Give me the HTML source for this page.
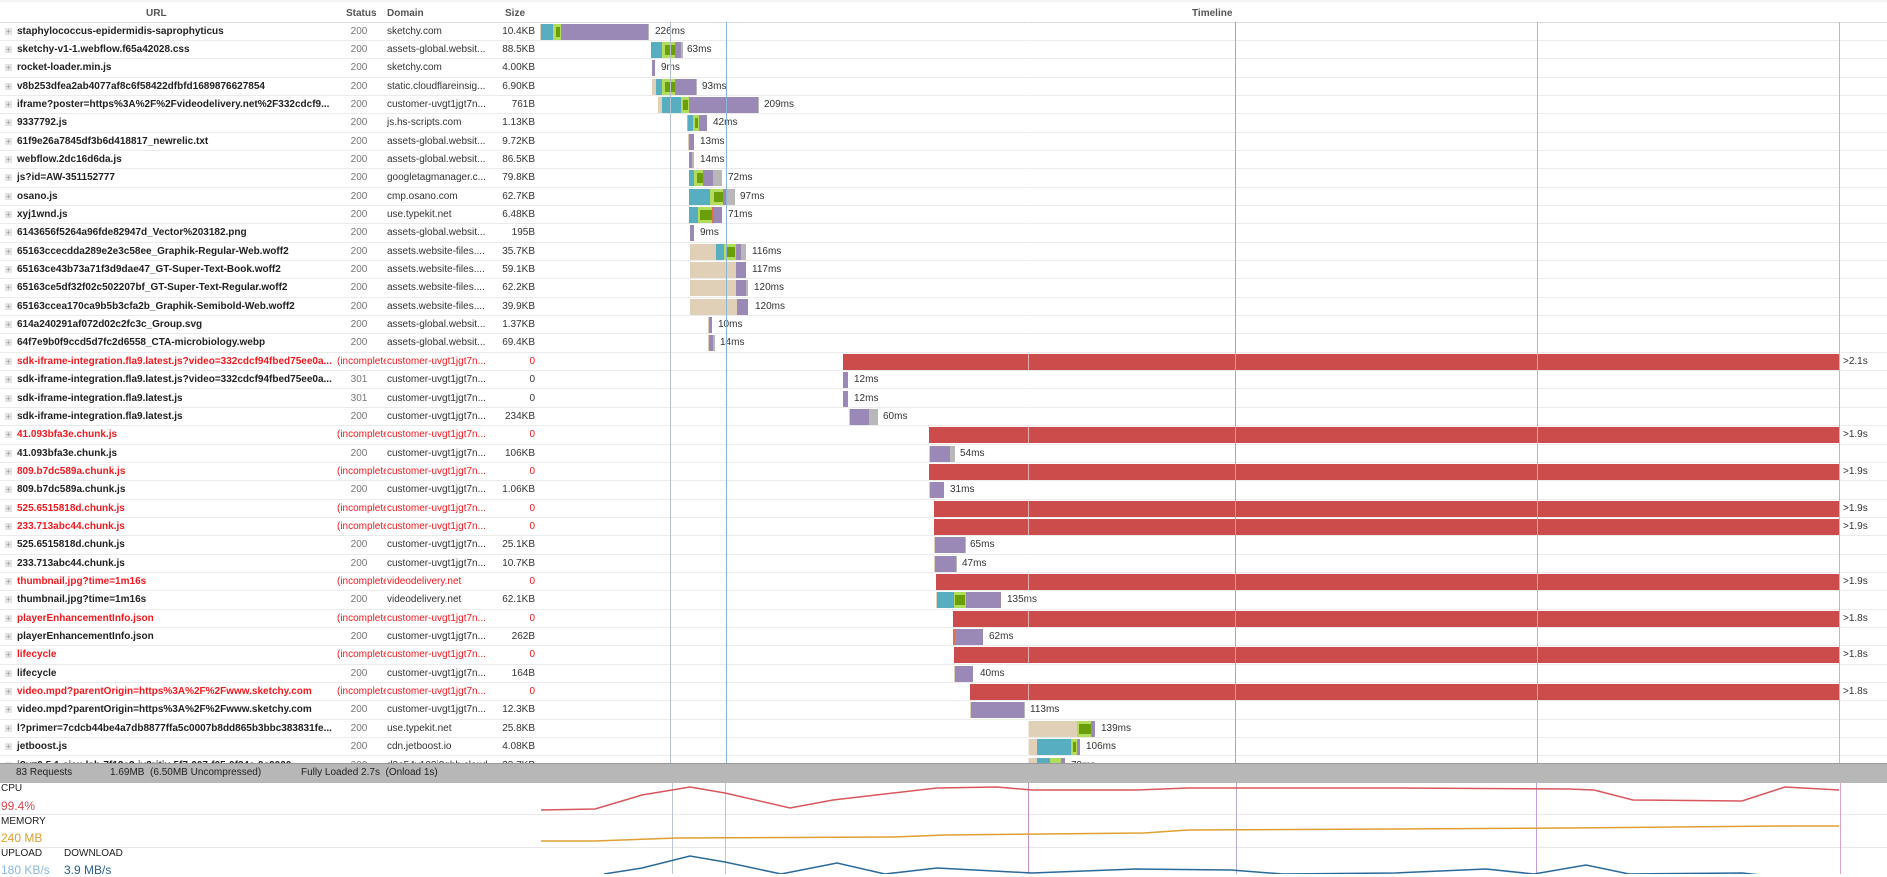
<!DOCTYPE html>
<html><head><meta charset="utf-8">
<style>
*{margin:0;padding:0;box-sizing:border-box}
body{width:1887px;height:874px;overflow:hidden;background:#fff;font-family:"Liberation Sans",Arial,sans-serif;font-size:10px;color:#222;position:relative}
.a{position:absolute;white-space:nowrap}
.hdr{position:absolute;top:8px;font-size:10px;color:#555;font-weight:bold}
.row{position:absolute;left:0;width:1887px;height:18.35px;border-bottom:1px solid #ebebeb}
.pl{position:absolute;left:5px;top:5px;width:7px;height:7px;background:#e4e4e4;color:#999;font-size:8px;line-height:7px;text-align:center}
.url{position:absolute;left:17px;top:3px;font-weight:bold;color:#222}
.st{position:absolute;left:330px;width:58px;top:3px;text-align:center;color:#777}
.dm{position:absolute;left:387px;top:3px;color:#333}
.sz{position:absolute;left:470px;width:65px;top:3px;text-align:right;color:#333}
.red .url,.red .st,.red .dm,.red .sz{color:#f0191e}
.red .st{left:337px;width:49px;text-align:left;overflow:hidden}
.seg{position:absolute;top:1px;height:16px}
.lbl{position:absolute;top:3px;color:#333}
.vl{position:absolute;width:1px}
</style></head><body>
<div class="a" style="left:0;top:0;width:1887px;height:2px;background:#f4f4f4"></div>
<div class="hdr" style="left:146px">URL</div>
<div class="hdr" style="left:346px">Status</div>
<div class="hdr" style="left:387px">Domain</div>
<div class="hdr" style="left:505px">Size</div>
<div class="hdr" style="left:1192px">Timeline</div>
<div class="a" style="left:0;top:21.5px;width:1887px;height:1px;background:#ddd"></div>
<div id="rows"></div>
<div id="lines"></div>
<div class="a" style="left:0;top:763px;width:1887px;height:20px;background:#b7b7b7;border-top:1px solid #999"></div>
<div class="a" style="left:16px;top:767px;color:#222">83 Requests</div>
<div class="a" style="left:110px;top:767px;color:#222">1.69MB&nbsp; (6.50MB Uncompressed)</div>
<div class="a" style="left:301px;top:767px;color:#222">Fully Loaded 2.7s&nbsp; (Onload 1s)</div>
<div class="a" style="left:1px;top:783px;color:#222;font-size:10px">CPU</div>
<div class="a" style="left:1px;top:799px;color:#d44a4f;font-size:12px">99.4%</div>
<div class="a" style="left:0;top:814px;width:1887px;height:1px;background:#e8e8e8"></div>
<div class="a" style="left:1px;top:816px;color:#222;font-size:10px">MEMORY</div>
<div class="a" style="left:1px;top:831px;color:#e0a030;font-size:12px">240 MB</div>
<div class="a" style="left:0;top:847px;width:1887px;height:1px;background:#e8e8e8"></div>
<div class="a" style="left:1px;top:848px;color:#222;font-size:10px">UPLOAD</div>
<div class="a" style="left:64px;top:848px;color:#222;font-size:10px">DOWNLOAD</div>
<div class="a" style="left:1px;top:863px;color:#8ab8e0;font-size:12px">180 KB/s</div>
<div class="a" style="left:64px;top:863px;color:#2a6090;font-size:12px">3.9 MB/s</div>
<svg class="a" style="left:0;top:783px" width="1887" height="91" viewBox="0 783 1887 91">
<g stroke-width="1">
<line x1="672.5" y1="783" x2="672.5" y2="874" stroke="#b8c8d8"/>
<line x1="725.5" y1="783" x2="725.5" y2="874" stroke="#b8c8d8"/>
<line x1="1028.5" y1="783" x2="1028.5" y2="874" stroke="#c890c0"/>
<line x1="1236.5" y1="783" x2="1236.5" y2="874" stroke="#b8a8d0"/>
<line x1="1536.5" y1="783" x2="1536.5" y2="874" stroke="#c0a0e0"/>
<line x1="1840.5" y1="783" x2="1840.5" y2="874" stroke="#e0a0c8"/>
</g>
<polyline fill="none" stroke="#d9575c" stroke-width="1.5" points="541,810 595,809 642,795 690,787 725,793 790,808 833,800 937,788 997,787 1032,790 1136,790 1188,788 1395,788 1568,789 1594,790 1633,800 1742,801 1785,787 1839,790"/>
<polyline fill="none" stroke="#e0a030" stroke-width="1.5" points="541,841 595,841 677,838 893,837 945,835 1144,833 1188,830 1395,829 1568,828 1785,826 1839,826"/>
<polyline fill="none" stroke="#2a6a9a" stroke-width="1.5" points="604,874 642,868 690,856 725,862 781,874 837,863 885,874 937,868 1032,873 1136,869 1231,870 1283,874 1395,873 1486,869 1534,874 1586,865 1629,874 1742,873 1770,876"/>
</svg>
<script>
var T='#56aec0',LG='#b2dc5c',DG='#6a9e0a',P='#9a88b6',TN='#e0d0b8',G='#b8b8b8',R='#cc4b4b',O='#e07050';
var aw='assets-global.websit...',cu='customer-uvgt1jgt7n...',aw2='assets.website-files....';
var sdk='sdk-iframe-integration.fla9.latest.js?video=332cdcf94fbed75ee0a...';
var rows=[
['staphylococcus-epidermidis-saprophyticus','200','sketchy.com','10.4KB',[[540,541,TN],[541,553,T],[553,561,LG],[556,560,DG],[561,648,P],[648,649,G]],'226ms',655],
['sketchy-v1-1.webflow.f65a42028.css','200',aw,'88.5KB',[[651,662,T],[662,675,LG],[665,675,DG],[675,681,P],[681,683,G]],'63ms',687],
['rocket-loader.min.js','200','sketchy.com','4.00KB',[[652,655,P]],'9ms',661],
['v8b253dfea2ab4077af8c6f58422dfbfd1689876627854','200','static.cloudflareinsig...','6.90KB',[[652,656,TN],[656,662,T],[662,675,LG],[665,675,DG],[675,696,P],[696,697,G]],'93ms',702],
['iframe?poster=https%3A%2F%2Fvideodelivery.net%2F332cdcf9...','200',cu,'761B',[[658,662,TN],[662,681,T],[681,689,LG],[683,688,DG],[689,758,P],[758,759,G]],'209ms',764],
['9337792.js','200','js.hs-scripts.com','1.13KB',[[687,688,G],[688,693,T],[693,699,LG],[695,698,DG],[699,707,P]],'42ms',713],
['61f9e26a7845df3b6d418817_newrelic.txt','200',aw,'9.72KB',[[688,689,TN],[689,694,P]],'13ms',700],
['webflow.2dc16d6da.js','200',aw,'86.5KB',[[689,692,P],[692,694,G]],'14ms',700],
['js?id=AW-351152777','200','googletagmanager.c...','79.8KB',[[689,694,T],[694,703,LG],[697,703,DG],[703,713,P],[713,722,G]],'72ms',728],
['osano.js','200','cmp.osano.com','62.7KB',[[689,710,T],[710,723,LG],[714,723,DG],[723,726,P],[726,735,G]],'97ms',740],
['xyj1wnd.js','200','use.typekit.net','6.48KB',[[689,698,T],[698,712,LG],[700,712,DG],[712,714,O],[714,722,P]],'71ms',728],
['6143656f5264a96fde82947d_Vector%203182.png','200',aw,'195B',[[690,694,P]],'9ms',700],
['65163ccecdda289e2e3c58ee_Graphik-Regular-Web.woff2','200',aw2,'35.7KB',[[690,716,TN],[716,724,T],[724,736,LG],[727,735,DG],[736,741,P],[741,746,G]],'116ms',752],
['65163ce43b73a71f3d9dae47_GT-Super-Text-Book.woff2','200',aw2,'59.1KB',[[690,736,TN],[736,746,P]],'117ms',752],
['65163ce5df32f02c502207bf_GT-Super-Text-Regular.woff2','200',aw2,'62.2KB',[[690,736,TN],[736,746,P],[746,748,G]],'120ms',754],
['65163ccea170ca9b5b3cfa2b_Graphik-Semibold-Web.woff2','200',aw2,'39.9KB',[[690,737,TN],[737,748,P]],'120ms',755],
['614a240291af072d02c2fc3c_Group.svg','200',aw,'1.37KB',[[708,709,TN],[709,712,P]],'10ms',718],
['64f7e9b0f9ccd5d7fc2d6558_CTA-microbiology.webp','200',aw,'69.4KB',[[708,709,TN],[709,713,P],[713,715,G]],'14ms',720],
[sdk,'(incomplete)',cu,'0',[[843,1839,R]],'>2.1s',1843,1],
[sdk,'301',cu,'0',[[843,848,P]],'12ms',854],
['sdk-iframe-integration.fla9.latest.js','301',cu,'0',[[843,848,P]],'12ms',854],
['sdk-iframe-integration.fla9.latest.js','200',cu,'234KB',[[849,850,TN],[850,869,P],[869,878,G]],'60ms',883],
['41.093bfa3e.chunk.js','(incomplete)',cu,'0',[[929,1839,R]],'>1.9s',1843,1],
['41.093bfa3e.chunk.js','200',cu,'106KB',[[929,930,TN],[930,950,P],[950,955,G]],'54ms',960],
['809.b7dc589a.chunk.js','(incomplete)',cu,'0',[[929,1839,R]],'>1.9s',1843,1],
['809.b7dc589a.chunk.js','200',cu,'1.06KB',[[929,930,TN],[930,944,P]],'31ms',950],
['525.6515818d.chunk.js','(incomplete)',cu,'0',[[934,1839,R]],'>1.9s',1843,1],
['233.713abc44.chunk.js','(incomplete)',cu,'0',[[934,1839,R]],'>1.9s',1843,1],
['525.6515818d.chunk.js','200',cu,'25.1KB',[[934,935,TN],[935,965,P],[965,966,G]],'65ms',970],
['233.713abc44.chunk.js','200',cu,'10.7KB',[[934,935,TN],[935,956,P],[956,957,G]],'47ms',962],
['thumbnail.jpg?time=1m16s','(incomplete)','videodelivery.net','0',[[936,1839,R]],'>1.9s',1843,1],
['thumbnail.jpg?time=1m16s','200','videodelivery.net','62.1KB',[[936,937,TN],[937,954,T],[954,966,LG],[955,965,DG],[966,1001,P]],'135ms',1007],
['playerEnhancementInfo.json','(incomplete)',cu,'0',[[953,1839,R]],'>1.8s',1843,1],
['playerEnhancementInfo.json','200',cu,'262B',[[953,955,O],[955,983,P]],'62ms',989],
['lifecycle','(incomplete)',cu,'0',[[954,1839,R]],'>1.8s',1843,1],
['lifecycle','200',cu,'164B',[[954,955,TN],[955,973,P]],'40ms',980],
['video.mpd?parentOrigin=https%3A%2F%2Fwww.sketchy.com','(incomplete)',cu,'0',[[970,1839,R]],'>1.8s',1843,1],
['video.mpd?parentOrigin=https%3A%2F%2Fwww.sketchy.com','200',cu,'12.3KB',[[970,971,TN],[971,1024,P],[1024,1025,G]],'113ms',1030],
['l?primer=7cdcb44be4a7db8877ffa5c0007b8dd865b3bbc383831fe...','200','use.typekit.net','25.8KB',[[1028,1077,TN],[1077,1091,LG],[1079,1091,DG],[1091,1095,P]],'139ms',1101],
['jetboost.js','200','cdn.jetboost.io','4.08KB',[[1028,1037,TN],[1037,1071,T],[1071,1077,LG],[1073,1076,DG],[1077,1080,P]],'106ms',1086],
['i?v=0.5.1-ajax-lab-7f12c2-iv3ritiv-5f7-007-f05-0f34e-0c0000','200','d3e54v103j8qbb.cloud...','33.7KB',[[1028,1037,TN],[1037,1050,T],[1050,1061,LG],[1061,1065,P]],'79ms',1071]
];
var h='';
rows.forEach(function(r,i){
 var top=22.5+18.35*i;
 h+='<div class="row'+(r[7]?' red':'')+'" style="top:'+top+'px"><div class="pl">+</div><div class="url">'+r[0]+'</div><div class="st">'+r[1]+'</div><div class="dm">'+r[2]+'</div><div class="sz">'+r[3]+'</div>';
 r[4].forEach(function(s){
  var dg=s[2]==DG;
  h+='<div class="seg" style="left:'+s[0]+'px;width:'+(s[1]-s[0])+'px;background:'+s[2]+(dg?';top:4px;height:10px':'')+'"></div>';
 });
 h+='<div class="lbl" style="left:'+r[6]+'px">'+r[5]+'</div></div>';
});
document.getElementById('rows').innerHTML=h;
var L=[[670,'#b0c0cc'],[726,'#8ab4d8'],[1028,'rgba(255,255,255,0.55)'],[1235,'#8ab4e0'],[1537,'#c8a8e0'],[1839,'#d8a8d8']];
var lh='';L.forEach(function(l){lh+='<div class="vl" style="left:'+l[0]+'px;top:22px;height:741px;background:'+l[1]+'"></div>';});
document.getElementById('lines').innerHTML=lh;
</script>
</body></html>
